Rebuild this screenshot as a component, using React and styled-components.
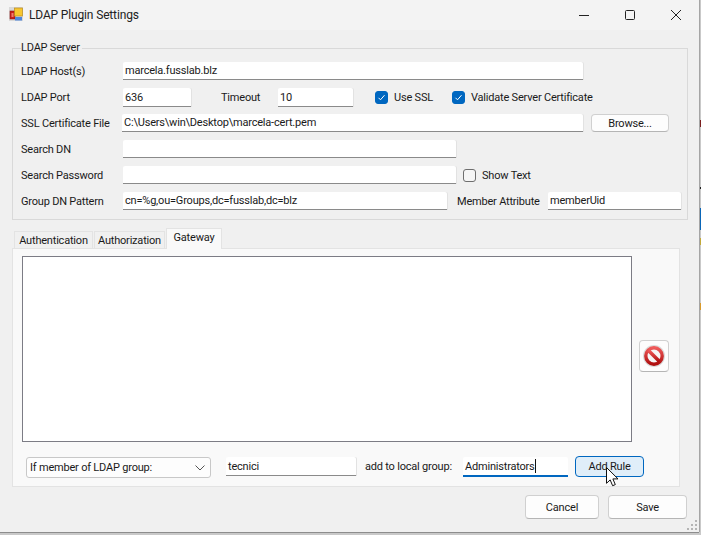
import React from "react";
import styled, { createGlobalStyle } from "styled-components";

const GlobalStyle = createGlobalStyle`
  html, body {
    margin: 0;
    padding: 0;
    width: 701px;
    height: 535px;
    overflow: hidden;
  }
  body {
    font-family: Roboto, "Open Sans", sans-serif;
    font-size: 11px;
    letter-spacing: -0.2px;
    color: #1a1a1a;
  }
`;

export default function App() {
  return (
    <>
      <GlobalStyle />
      <Desktop>
        <Window>
          <TitleBar>
            <AppIcon />
            <Title>LDAP Plugin Settings</Title>
            <WinControls>
              <WinButton>
                <svg width="12" height="12" viewBox="0 0 12 12">
                  <path d="M1 6.5h10" stroke="#222" fill="none" />
                </svg>
              </WinButton>
              <WinButton>
                <svg width="12" height="12" viewBox="0 0 12 12">
                  <rect x="1.5" y="1.5" width="9" height="9" rx="1" stroke="#222" fill="none" />
                </svg>
              </WinButton>
              <WinButton>
                <svg width="12" height="12" viewBox="0 0 12 12">
                  <path d="M1 1l10 10M11 1L1 11" stroke="#222" fill="none" />
                </svg>
              </WinButton>
            </WinControls>
          </TitleBar>

          <Content>
            <ServerGroup>
              <Legend>LDAP Server</Legend>
              <Row>
                <Label $w={102}>LDAP Host(s)</Label>
                <Field $w={460}>marcela.fusslab.blz</Field>
              </Row>
              <Row $h={19}>
                <Label $w={102}>LDAP Port</Label>
                <Field $w={68}>636</Field>
                <Label $w={57} $left={30}>Timeout</Label>
                <Field $w={75}>10</Field>
                <Check $left={22} $on>Use SSL</Check>
                <Check $left={19} $on>Validate Server Certificate</Check>
              </Row>
              <Row $top={7}>
                <Label $w={101}>SSL Certificate File</Label>
                <Field $w={461}>C:\Users\win\Desktop\marcela-cert.pem</Field>
                <BrowseButton>Browse...</BrowseButton>
              </Row>
              <Row>
                <Label $w={102}>Search DN</Label>
                <Field $w={333} />
              </Row>
              <Row>
                <Label $w={102}>Search Password</Label>
                <Field $w={333} />
                <Check $left={7}>Show Text</Check>
              </Row>
              <Row>
                <Label $w={102}>Group DN Pattern</Label>
                <Field $w={324}>cn=%g,ou=Groups,dc=fusslab,dc=blz</Field>
                <Label $w={91} $left={10}>Member Attribute</Label>
                <Field $w={133}>memberUid</Field>
              </Row>
            </ServerGroup>

            <TabStrip>
              <Tab $w={79}>Authentication</Tab>
              <Tab $w={71}>Authorization</Tab>
              <Tab $w={56} $active>Gateway</Tab>
            </TabStrip>
            <TabPanel>
              <ListRow>
                <RuleList />
                <RemoveButton>
                  <svg width="24" height="24" viewBox="0 0 24 24">
                    <defs>
                      <linearGradient id="ring" x1="0" y1="0" x2="0" y2="1">
                        <stop offset="0" stopColor="#ef5a5a" />
                        <stop offset="1" stopColor="#b01010" />
                      </linearGradient>
                    </defs>
                    <circle cx="12" cy="12" r="11" fill="#9c9c9c" opacity="0.35" />
                    <circle cx="12" cy="12" r="8.2" fill="#f6f6f6" stroke="url(#ring)" strokeWidth="3.4" />
                    <path d="M6.5 6.5l11 11" stroke="url(#ring)" strokeWidth="3.6" />
                  </svg>
                </RemoveButton>
              </ListRow>
              <RuleRow>
                <Select>
                  If member of LDAP group:
                  <svg width="12" height="8" viewBox="0 0 12 8">
                    <path d="M1.5 1.5L6 6l4.500-4.500" stroke="#555" fill="none" />
                  </svg>
                </Select>
                <Field $w={130} $h={19} $left={15}>tecnici</Field>
                <Label $w={98} $left={9}>add to local group:</Label>
                <Field $w={105} $h={20} $focused>
                  Administrators<Caret />
                </Field>
                <AddButton>Add Rule</AddButton>
              </RuleRow>
            </TabPanel>

            <Footer>
              <DialogButton $w={74}>Cancel</DialogButton>
              <DialogButton $w={79}>Save</DialogButton>
            </Footer>
          </Content>

          <Grip>
            <svg width="12" height="12" viewBox="0 0 12 12" fill="#b4b4b4">
              <rect x="8" y="0" width="2" height="2" />
              <rect x="4" y="4" width="2" height="2" />
              <rect x="8" y="4" width="2" height="2" />
              <rect x="0" y="8" width="2" height="2" />
              <rect x="4" y="8" width="2" height="2" />
              <rect x="8" y="8" width="2" height="2" />
            </svg>
          </Grip>
          <Pointer>
            <svg width="13" height="20" viewBox="0 0 13 20">
              <path
                d="M.5.5v15.8l3.700-3.400 2.400 5.800 2.700-1.100-2.400-5.700h5.100z"
                fill="#fff"
                stroke="#111"
                strokeLinejoin="round"
              />
            </svg>
          </Pointer>
        </Window>
      </Desktop>
    </>
  );
}

function AppIcon() {
  return (
    <AppIconWrap>
      <svg width="16" height="16" viewBox="0 0 16 16">
        <rect x="0" y="0" width="14" height="14" fill="#d9d9d9" />
        <rect x="1" y="4" width="5" height="8" fill="#c8201c" stroke="#8a1a14" strokeWidth="0.6" />
        <rect x="2.500" y="6" width="2" height="4" fill="#f07a70" />
        <rect x="5.500" y="1" width="8" height="8" fill="#f7c62f" stroke="#b88a20" strokeWidth="0.7" />
        <rect x="6" y="10" width="7" height="3.500" fill="#4f86dc" />
      </svg>
    </AppIconWrap>
  );
}

function Check({ children, $on, $left }) {
  return (
    <CheckWrap $left={$left}>
      <CheckBox $on={$on}>
        {$on && (
          <svg width="9" height="9" viewBox="0 0 9 9">
            <path d="M1.500 4.800l2 2 4-4.600" stroke="#fff" strokeWidth="1" fill="none" />
          </svg>
        )}
      </CheckBox>
      {children}
    </CheckWrap>
  );
}

const Desktop = styled.div`
  width: 701px;
  height: 535px;
  background:
    linear-gradient(
      to bottom,
      #c9c9c9 0 120px,
      #7a1f1f 120px 127px,
      #c9c9c9 127px 187px,
      #222 187px 189px,
      #c9c9c9 189px 208px,
      #0a66b8 208px 230px,
      #c9c9c9 230px 238px,
      #c2a93a 238px 245px,
      #c9c9c9 245px 303px,
      #d99a2b 303px 310px,
      #c9c9c9 310px 100%
    );
`;

const Window = styled.div`
  position: relative;
  width: 699px;
  height: 532px;
  display: flex;
  flex-direction: column;
  background: #f0f0f0;
  box-shadow: 0 1px 0 #8d8d8d, 1px 0 0 #a5a5a5;
`;

const TitleBar = styled.div`
  height: 30px;
  display: flex;
  align-items: center;
  background: #f3f3f3;
  padding-left: 9px;
`;

const AppIconWrap = styled.div`
  width: 16px;
  height: 16px;
  margin-right: 4px;
  margin-top: -1px;
`;

const Title = styled.div`
  flex: 1;
  font-size: 12px;
  letter-spacing: -0.15px;
  color: #222;
`;

const WinControls = styled.div`
  display: flex;
  height: 30px;
`;

const WinButton = styled.div`
  width: 46px;
  display: flex;
  align-items: center;
  justify-content: center;
`;

const Content = styled.div`
  flex: 1;
  display: flex;
  flex-direction: column;
  padding: 11px 12px 0 12px;
`;

const ServerGroup = styled.fieldset`
  box-sizing: border-box;
  margin: 0;
  width: 676px;
  height: 179px;
  padding: 7px 0 0 8px;
  border: 1px solid #d9d9d9;
  display: flex;
  flex-direction: column;
`;

const Legend = styled.legend`
  padding: 0 2px 0 0;
  margin-left: 0;
  line-height: 14px;
`;

const Row = styled.div`
  display: flex;
  align-items: center;
  height: ${(p) => p.$h || 18}px;
  margin-top: ${(p) => (p.$top === undefined ? 8 : p.$top)}px;
  &:first-of-type {
    margin-top: 0;
  }
`;

const Label = styled.div`
  flex: none;
  box-sizing: border-box;
  width: ${(p) => p.$w}px;
  margin-left: ${(p) => p.$left || 0}px;
  white-space: nowrap;
`;

const Field = styled.div`
  box-sizing: border-box;
  flex: none;
  width: ${(p) => p.$w}px;
  height: ${(p) => p.$h || "100%"}${(p) => (p.$h ? "px" : "")};
  margin-left: ${(p) => p.$left || 0}px;
  padding: 0 2px;
  display: flex;
  align-items: center;
  white-space: pre;
  background: #fff;
  border-bottom: ${(p) => (p.$focused ? "2px solid #0067c0" : "1px solid #8a8a8a")};
  border-radius: 2px 2px 0 0;
  box-shadow: ${(p) => (p.$focused ? "none" : "1px 0 0 #e2e2e2")};
`;

const Caret = styled.span`
  width: 1px;
  height: 14px;
  background: #111;
`;

const CheckWrap = styled.div`
  flex: none;
  display: flex;
  align-items: center;
  gap: 6px;
  margin-left: ${(p) => p.$left || 0}px;
  white-space: nowrap;
`;

const CheckBox = styled.span`
  box-sizing: border-box;
  width: 13px;
  height: 13px;
  border-radius: 3px;
  display: flex;
  align-items: center;
  justify-content: center;
  background: ${(p) => (p.$on ? "#0067c0" : "#f5f5f5")};
  border: 1px solid ${(p) => (p.$on ? "#0067c0" : "#6e6e6e")};
`;

const ButtonBase = styled.div`
  box-sizing: border-box;
  display: flex;
  align-items: center;
  justify-content: center;
  background: #fdfdfd;
  border: 1px solid #d0d0d0;
  border-bottom-color: #b5b5b5;
  border-radius: 4px;
  color: #1a1a1a;
`;

const BrowseButton = styled(ButtonBase)`
  width: 78px;
  height: 18px;
  margin-left: 8px;
`;

const TabStrip = styled.div`
  display: flex;
  align-items: flex-end;
  height: 20px;
  margin-top: 8px;
  padding-left: 2px;
`;

const Tab = styled.div`
  box-sizing: border-box;
  width: ${(p) => p.$w}px;
  height: ${(p) => (p.$active ? 21 : 17)}px;
  padding: ${(p) => (p.$active ? "0 0 3px" : "0")};
  margin-right: 1px;
  display: flex;
  align-items: center;
  justify-content: center;
  background: ${(p) => (p.$active ? "#f9f9f9" : "#f0f0f0")};
  border: 1px solid #e3e3e3;
  border-bottom: none;
  margin-bottom: ${(p) => (p.$active ? -1 : 0)}px;
  position: relative;
`;

const TabPanel = styled.div`
  box-sizing: border-box;
  width: 668px;
  height: 239px;
  padding: 7px 0 0 9px;
  background: #f9f9f9;
  border: 1px solid #e3e3e3;
  display: flex;
  flex-direction: column;
`;

const ListRow = styled.div`
  display: flex;
  align-items: center;
  height: 186px;
`;

const RuleList = styled.div`
  box-sizing: border-box;
  width: 610px;
  height: 186px;
  background: #fff;
  border: 1px solid #7c7c85;
`;

const RemoveButton = styled(ButtonBase)`
  width: 30px;
  height: 32px;
  margin-left: 7px;
  margin-top: 14px;
`;

const RuleRow = styled.div`
  display: flex;
  align-items: flex-start;
  height: 21px;
  margin-top: 15px;
  padding-left: 4px;
  line-height: 19px;
`;

const Select = styled.div`
  box-sizing: border-box;
  flex: none;
  width: 185px;
  height: 21px;
  padding: 0 4px 0 3px;
  display: flex;
  align-items: center;
  justify-content: space-between;
  background: #fdfdfd;
  border: 1px solid #c8c8c8;
  border-radius: 3px;
  white-space: nowrap;
`;

const AddButton = styled(ButtonBase)`
  width: 69px;
  height: 21px;
  margin-left: 7px;
  margin-top: -1px;
  background: #e0eef9;
  border: 1px solid #0067c0;
`;

const Footer = styled.div`
  display: flex;
  justify-content: flex-end;
  gap: 9px;
  margin-top: 8px;
`;

const DialogButton = styled(ButtonBase)`
  width: ${(p) => p.$w}px;
  height: 24px;
`;

const Grip = styled.div`
  position: absolute;
  right: 0;
  bottom: 0;
  width: 12px;
  height: 12px;
`;

const Pointer = styled.div`
  position: absolute;
  left: 606px;
  top: 467px;
  line-height: 0;
`;
